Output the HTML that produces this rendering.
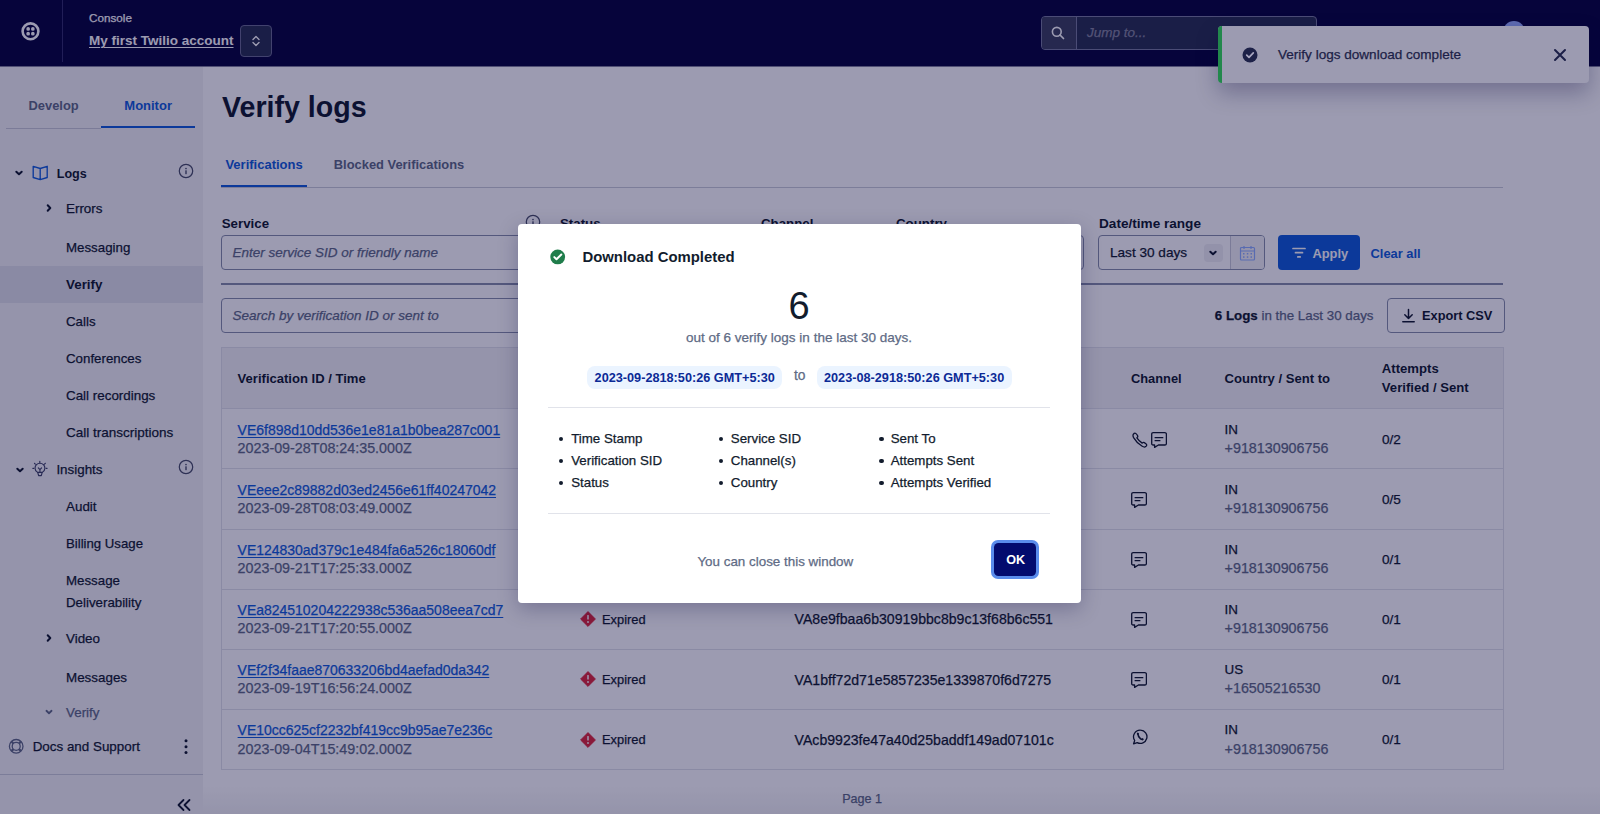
<!DOCTYPE html>
<html><head><meta charset="utf-8"><title>Verify logs</title>
<style>
html,body{margin:0;padding:0;}
body{width:1600px;height:814px;overflow:hidden;position:relative;background:#fff;font-family:"Liberation Sans",sans-serif;color:#121c2d;}
.a{position:absolute;}
.t{position:absolute;white-space:nowrap;}
.r{-webkit-text-stroke:0.25px currentColor;}
</style></head><body>
<div class="a" style="left:0px;top:0px;width:1600px;height:66px;background:#08053d"></div>
<div class="a" style="left:0px;top:66px;width:1600px;height:1px;background:#84839c"></div>
<div class="a" style="left:62px;top:0px;width:1px;height:62px;background:#34316a"></div>
<svg class="a" style="left:20px;top:21px;" width="22" height="22" viewBox="0 0 22 22"><circle cx="10.5" cy="10.3" r="7.9" fill="none" stroke="#fff" stroke-width="2.6"/><circle cx="8.15" cy="7.9" r="1.85" fill="#fff"/><circle cx="12.85" cy="7.9" r="1.85" fill="#fff"/><circle cx="8.15" cy="12.7" r="1.85" fill="#fff"/><circle cx="12.85" cy="12.7" r="1.85" fill="#fff"/></svg>
<div class="t r" style="left:89.00px;top:7.73px;font-size:11.7px;line-height:20px;font-weight:400;color:#ffffff;">Console</div>
<div class="t " style="left:89.00px;top:31.14px;font-size:13.5px;line-height:20px;font-weight:700;color:#ffffff;text-decoration:underline;text-underline-offset:2px;">My first Twilio account</div>
<div class="a" style="left:240px;top:25px;width:32px;height:32px;box-sizing:border-box;border:1px solid #6a6d90;border-radius:4px;background:#283050"></div>
<svg class="a" style="left:248px;top:33px;" width="16" height="16" viewBox="0 0 16 16"><path d="M5 6.5 L8 3.5 L11 6.5 M5 9.5 L8 12.5 L11 9.5" fill="none" stroke="#fff" stroke-width="1.4" stroke-linecap="round" stroke-linejoin="round"/></svg>
<div class="a" style="left:1040.5px;top:16px;width:276px;height:34px;box-sizing:border-box;border:1px solid #7a7d9e;border-radius:4px;background:#283050"></div>
<div class="a" style="left:1041.5px;top:17px;width:34.5px;height:32px;background:#3d425e;border-radius:3px 0 0 3px;border-right:1px solid #7a7d9e"></div>
<svg class="a" style="left:1050px;top:25px;" width="16" height="16" viewBox="0 0 16 16"><circle cx="6.8" cy="6.8" r="4.4" fill="none" stroke="#fff" stroke-width="1.6"/><path d="M10 10 L13.5 13.5" stroke="#fff" stroke-width="1.7" stroke-linecap="round"/></svg>
<div class="t r" style="left:1087.00px;top:23.04px;font-size:13.5px;line-height:20px;font-weight:400;color:#86889f;font-style:italic;">Jump to...</div>
<div class="a" style="left:1503px;top:21px;width:22px;height:22px;border-radius:50%;background:#99b0ff"></div>
<div class="a" style="left:0px;top:67px;width:203px;height:747px;background:#f4f4f6"></div>
<div class="t " style="left:28.50px;top:96.24px;font-size:12.9px;line-height:20px;font-weight:700;color:#606b85;">Develop</div>
<div class="t " style="left:124.30px;top:96.20px;font-size:13px;line-height:20px;font-weight:700;color:#125ed9;">Monitor</div>
<div class="a" style="left:6px;top:128px;width:95px;height:1px;background:#c8cbd6"></div>
<div class="a" style="left:101px;top:126px;width:94px;height:2px;background:#125ed9"></div>
<svg class="a" style="left:13.3px;top:167px;" width="12" height="12" viewBox="0 0 12 12"><path d="M3.3 4.7 L6 7.3 L8.7 4.7" fill="none" stroke="#121c2d" stroke-width="2.0" stroke-linecap="round" stroke-linejoin="round"/></svg>
<svg class="a" style="left:31.5px;top:165px;" width="17" height="16" viewBox="0 0 17 16"><path d="M1.2 1.3 L8.2 3.5 L15.2 1.3 L15.2 12.5 L8.2 14.6 L1.2 12.5 Z M8.2 3.5 L8.2 14.6" fill="none" stroke="#125ed9" stroke-width="1.35" stroke-linejoin="round"/></svg>
<div class="t " style="left:56.70px;top:163.54px;font-size:12.6px;line-height:20px;font-weight:700;color:#121c2d;">Logs</div>
<svg class="a" style="left:178px;top:163px;" width="16" height="16" viewBox="0 0 16 16"><circle cx="8" cy="8" r="6.7" fill="none" stroke="#4a5068" stroke-width="1.25"/><circle cx="8" cy="5.5" r="0.85" fill="#4a5068"/><rect x="7.3" y="7.2" width="1.4" height="4" rx="0.4" fill="#4a5068"/></svg>
<svg class="a" style="left:43.4px;top:202px;" width="12" height="12" viewBox="0 0 12 12"><path d="M4.7 3.3 L7.3 6 L4.7 8.7" fill="none" stroke="#121c2d" stroke-width="2.0" stroke-linecap="round" stroke-linejoin="round"/></svg>
<div class="t r" style="left:66.00px;top:198.57px;font-size:13.4px;line-height:20px;font-weight:400;color:#121c2d;">Errors</div>
<div class="t r" style="left:66.00px;top:237.60px;font-size:13.3px;line-height:20px;font-weight:400;color:#121c2d;">Messaging</div>
<div class="a" style="left:0px;top:266px;width:203px;height:37px;background:#e1e3ea"></div>
<div class="t " style="left:66.00px;top:274.87px;font-size:13.4px;line-height:20px;font-weight:700;color:#121c2d;">Verify</div>
<div class="t r" style="left:66.00px;top:312.00px;font-size:13.3px;line-height:20px;font-weight:400;color:#121c2d;">Calls</div>
<div class="t r" style="left:66.00px;top:349.00px;font-size:13.3px;line-height:20px;font-weight:400;color:#121c2d;">Conferences</div>
<div class="t r" style="left:66.00px;top:386.27px;font-size:13.4px;line-height:20px;font-weight:400;color:#121c2d;">Call recordings</div>
<div class="t r" style="left:66.00px;top:423.24px;font-size:13.5px;line-height:20px;font-weight:400;color:#121c2d;">Call transcriptions</div>
<svg class="a" style="left:13.5px;top:463.8px;" width="12" height="12" viewBox="0 0 12 12"><path d="M3.3 4.7 L6 7.3 L8.7 4.7" fill="none" stroke="#121c2d" stroke-width="2.0" stroke-linecap="round" stroke-linejoin="round"/></svg>
<svg class="a" style="left:31px;top:460px;" width="18" height="18" viewBox="0 0 18 18"><g fill="none" stroke="#3f4466" stroke-width="1.15" stroke-linecap="round" stroke-linejoin="round"><path d="M6.6 12.4 Q4 10.6 4 8.2 A4.95 4.95 0 0 1 13.9 8.2 Q13.9 10.6 11.3 12.4 Z"/><path d="M6.8 12.6 L7.6 15.6 L10.3 15.6 L11.1 12.6"/><path d="M7.3 7.8 L8.95 9.6 L10.6 7.8 M8.95 9.6 L8.95 12.2"/><path d="M8.8 1.3 L8.8 2.6 M3.5 3.3 L4.3 4.2 M14.3 3.3 L13.5 4.2 M1.8 8.3 L2.8 8.3 M15.1 8.3 L16.1 8.3"/></g></svg>
<div class="t r" style="left:56.40px;top:459.77px;font-size:13.4px;line-height:20px;font-weight:400;color:#121c2d;">Insights</div>
<svg class="a" style="left:178.1px;top:459.1px;" width="16" height="16" viewBox="0 0 16 16"><circle cx="8" cy="8" r="6.7" fill="none" stroke="#4a5068" stroke-width="1.25"/><circle cx="8" cy="5.5" r="0.85" fill="#4a5068"/><rect x="7.3" y="7.2" width="1.4" height="4" rx="0.4" fill="#4a5068"/></svg>
<div class="t r" style="left:66.00px;top:496.87px;font-size:13.4px;line-height:20px;font-weight:400;color:#121c2d;">Audit</div>
<div class="t r" style="left:66.00px;top:533.84px;font-size:13.2px;line-height:20px;font-weight:400;color:#121c2d;">Billing Usage</div>
<div class="t r" style="left:66.00px;top:571.00px;font-size:13.3px;line-height:20px;font-weight:400;color:#121c2d;">Message</div>
<div class="t r" style="left:66.00px;top:593.10px;font-size:13.3px;line-height:20px;font-weight:400;color:#121c2d;">Deliverability</div>
<svg class="a" style="left:43.3px;top:632px;" width="12" height="12" viewBox="0 0 12 12"><path d="M4.7 3.3 L7.3 6 L4.7 8.7" fill="none" stroke="#121c2d" stroke-width="2.0" stroke-linecap="round" stroke-linejoin="round"/></svg>
<div class="t r" style="left:66.00px;top:628.67px;font-size:13.4px;line-height:20px;font-weight:400;color:#121c2d;">Video</div>
<div class="t r" style="left:66.00px;top:667.57px;font-size:13.4px;line-height:20px;font-weight:400;color:#121c2d;">Messages</div>
<svg class="a" style="left:42.9px;top:706px;" width="12" height="12" viewBox="0 0 12 12"><path d="M3.435 4.765000000000001 L6 7.234999999999999 L8.565 4.765000000000001" fill="none" stroke="#606b85" stroke-width="1.8" stroke-linecap="round" stroke-linejoin="round"/></svg>
<div class="t r" style="left:66.00px;top:702.57px;font-size:13.4px;line-height:20px;font-weight:400;color:#606b85;">Verify</div>
<svg class="a" style="left:7.5px;top:738px;" width="17" height="17" viewBox="0 0 17 17"><g fill="none" stroke="#606b85" stroke-width="1.3"><circle cx="8.2" cy="8.3" r="6.8"/><circle cx="8.2" cy="8.3" r="4"/><path d="M3.4 3.5 L5.4 5.5 M13 3.5 L11 5.5 M3.4 13.1 L5.4 11.1 M13 13.1 L11 11.1" stroke-width="2.2"/></g></svg>
<div class="t r" style="left:32.70px;top:736.67px;font-size:13.4px;line-height:20px;font-weight:400;color:#121c2d;">Docs and Support</div>
<svg class="a" style="left:182px;top:738px;" width="8" height="18" viewBox="0 0 8 18"><circle cx="4" cy="2.8" r="1.5" fill="#121c2d"/><circle cx="4" cy="8.7" r="1.5" fill="#121c2d"/><circle cx="4" cy="14.6" r="1.5" fill="#121c2d"/></svg>
<div class="a" style="left:0px;top:774px;width:203px;height:1px;background:#cacdd8"></div>
<svg class="a" style="left:176px;top:798px;" width="16" height="14" viewBox="0 0 16 14"><path d="M7.5 2 L2.5 7 L7.5 12 M13.5 2 L8.5 7 L13.5 12" fill="none" stroke="#121c2d" stroke-width="1.8" stroke-linecap="round" stroke-linejoin="round"/></svg>
<div class="t " style="left:222.00px;top:89.05px;font-size:28.6px;line-height:36px;font-weight:700;color:#121c2d;">Verify logs</div>
<div class="t " style="left:225.40px;top:155.10px;font-size:13px;line-height:20px;font-weight:700;color:#125ed9;">Verifications</div>
<div class="t " style="left:333.80px;top:155.14px;font-size:12.9px;line-height:20px;font-weight:700;color:#606b85;">Blocked Verifications</div>
<div class="a" style="left:221px;top:187px;width:1282px;height:1px;background:#cacdd8"></div>
<div class="a" style="left:221px;top:185px;width:86px;height:2px;background:#125ed9"></div>
<div class="t " style="left:221.75px;top:213.85px;font-size:13.3px;line-height:20px;font-weight:700;color:#121c2d;">Service</div>
<svg class="a" style="left:524.5px;top:213.5px;" width="16" height="16" viewBox="0 0 16 16"><circle cx="8" cy="8" r="6.7" fill="none" stroke="#4a5068" stroke-width="1.25"/><circle cx="8" cy="5.5" r="0.85" fill="#4a5068"/><rect x="7.3" y="7.2" width="1.4" height="4" rx="0.4" fill="#4a5068"/></svg>
<div class="t " style="left:560.00px;top:213.85px;font-size:13.3px;line-height:20px;font-weight:700;color:#121c2d;">Status</div>
<div class="t " style="left:761.00px;top:213.85px;font-size:13.3px;line-height:20px;font-weight:700;color:#121c2d;">Channel</div>
<div class="t " style="left:896.00px;top:213.85px;font-size:13.3px;line-height:20px;font-weight:700;color:#121c2d;">Country</div>
<div class="t " style="left:1099.00px;top:213.76px;font-size:13.6px;line-height:20px;font-weight:700;color:#121c2d;">Date/time range</div>
<div class="a" style="left:220.5px;top:235px;width:325px;height:35px;box-sizing:border-box;border:1px solid #8891aa;border-radius:4px;background:#fff;"></div>
<div class="t r" style="left:232.50px;top:243.04px;font-size:13.5px;line-height:20px;font-weight:400;color:#606b85;font-style:italic;">Enter service SID or friendly name</div>
<div class="a" style="left:560px;top:235px;width:186px;height:35px;box-sizing:border-box;border:1px solid #8891aa;border-radius:4px;background:#fff;"></div>
<div class="a" style="left:761px;top:235px;width:120px;height:35px;box-sizing:border-box;border:1px solid #8891aa;border-radius:4px;background:#fff;"></div>
<div class="a" style="left:896px;top:235px;width:188px;height:35px;box-sizing:border-box;border:1px solid #8891aa;border-radius:4px;background:#fff;"></div>
<div class="a" style="left:1098px;top:235px;width:167px;height:35px;box-sizing:border-box;border:1px solid #8891aa;border-radius:4px;background:#fff;"></div>
<div class="t r" style="left:1110.00px;top:243.41px;font-size:13.6px;line-height:20px;font-weight:400;color:#121c2d;">Last 30 days</div>
<div class="a" style="left:1204px;top:243.5px;width:18.5px;height:18.5px;background:#f0f1f4;border-radius:4px"></div>
<svg class="a" style="left:1207.2px;top:247px;" width="12" height="12" viewBox="0 0 12 12"><path d="M3.3 4.7 L6 7.3 L8.7 4.7" fill="none" stroke="#121c2d" stroke-width="2" stroke-linecap="round" stroke-linejoin="round"/></svg>
<div class="a" style="left:1230px;top:236px;width:34px;height:33px;box-sizing:border-box;background:#f4f4f6;border-left:1px solid #c8cbd6;border-radius:0 3px 3px 0"></div>
<svg class="a" style="left:1239px;top:245px;" width="17" height="16" viewBox="0 0 17 16"><g fill="none" stroke="#8fb0ff" stroke-width="1.2"><rect x="1.5" y="2.5" width="14" height="12.5" rx="1"/><path d="M1.5 6 L15.5 6 M5 1 L5 4 M12 1 L12 4"/></g><g fill="#8fb0ff"><rect x="4" y="8" width="1.5" height="1.5"/><rect x="7.8" y="8" width="1.5" height="1.5"/><rect x="11.5" y="8" width="1.5" height="1.5"/><rect x="4" y="11.3" width="1.5" height="1.5"/><rect x="7.8" y="11.3" width="1.5" height="1.5"/><rect x="11.5" y="11.3" width="1.5" height="1.5"/></g></svg>
<div class="a" style="left:1278px;top:235px;width:82px;height:35px;background:#125ed9;border-radius:4px"></div>
<svg class="a" style="left:1291px;top:245px;" width="16" height="16" viewBox="0 0 16 16"><path d="M2 3.5 L14 3.5 M4.5 7.7 L11.5 7.7 M6.8 11.9 L9.2 11.9" stroke="#fff" stroke-width="1.7" stroke-linecap="round"/></svg>
<div class="t " style="left:1312.40px;top:243.74px;font-size:12.9px;line-height:20px;font-weight:700;color:#fff;">Apply</div>
<div class="t " style="left:1370.50px;top:243.74px;font-size:12.9px;line-height:20px;font-weight:700;color:#125ed9;">Clear all</div>
<div class="a" style="left:221px;top:283px;width:1282px;height:2px;background:#8891aa"></div>
<div class="a" style="left:220.5px;top:298px;width:620px;height:35px;box-sizing:border-box;border:1px solid #8891aa;border-radius:4px;background:#fff;"></div>
<div class="t r" style="left:232.50px;top:306.04px;font-size:13.5px;line-height:20px;font-weight:400;color:#606b85;font-style:italic;">Search by verification ID or sent to</div>
<div class="t r" style="right:226.5px;top:306.49px;font-size:13.35px;line-height:20px;color:#606b85;text-align:right"><b style="color:#121c2d">6 Logs</b> in the Last 30 days</div>
<div class="a" style="left:1387px;top:298px;width:118px;height:35px;box-sizing:border-box;border:1px solid #8891aa;border-radius:4px;background:#fff"></div>
<svg class="a" style="left:1401px;top:308px;" width="16" height="16" viewBox="0 0 16 16"><path d="M7.5 1.5 L7.5 10.5 M3.8 6.8 L7.5 10.5 L11.2 6.8 M1.8 13.8 L13.2 13.8" fill="none" stroke="#121c2d" stroke-width="1.5" stroke-linecap="round" stroke-linejoin="round"/></svg>
<div class="t " style="left:1422.00px;top:306.37px;font-size:12.8px;line-height:20px;font-weight:700;color:#121c2d;">Export CSV</div>
<div class="a" style="left:221px;top:347px;width:1283px;height:423px;box-sizing:border-box;border:1px solid #e1e3ea;background:#fff"></div>
<div class="a" style="left:222px;top:348px;width:1281px;height:60px;background:#f4f4f6;border-bottom:1px solid #e1e3ea"></div>
<div class="t " style="left:237.60px;top:368.69px;font-size:13.05px;line-height:20px;font-weight:700;color:#121c2d;">Verification ID / Time</div>
<div class="t " style="left:580.60px;top:368.69px;font-size:13.05px;line-height:20px;font-weight:700;color:#121c2d;">Status</div>
<div class="t " style="left:794.60px;top:368.69px;font-size:13.05px;line-height:20px;font-weight:700;color:#121c2d;">Verification SID</div>
<div class="t " style="left:1131.00px;top:368.75px;font-size:12.85px;line-height:20px;font-weight:700;color:#121c2d;">Channel</div>
<div class="t " style="left:1224.60px;top:368.67px;font-size:13.1px;line-height:20px;font-weight:700;color:#121c2d;">Country / Sent to</div>
<div class="t " style="left:1381.80px;top:359.25px;font-size:13.15px;line-height:20px;font-weight:700;color:#121c2d;">Attempts</div>
<div class="t " style="left:1381.80px;top:378.05px;font-size:13.15px;line-height:20px;font-weight:700;color:#121c2d;">Verified / Sent</div>
<div class="t r" style="left:237.60px;top:419.78px;font-size:13.97px;line-height:20px;font-weight:400;color:#125ed9;text-decoration:underline;text-underline-offset:1.5px;">VE6f898d10dd536e1e81a1b0bea287c001</div>
<div class="t r" style="left:237.60px;top:438.07px;font-size:14.3px;line-height:20px;font-weight:400;color:#606b85;">2023-09-28T08:24:35.000Z</div>
<svg class="a" style="left:1132px;top:431.5px;" width="16" height="16" viewBox="0 0 16 16"><path d="M2.3 1.3 Q3.6 0.8 4.8 2.5 L5.6 3.7 Q6.1 4.6 5.3 5.4 L4.9 5.8 Q6.9 8.9 10.2 11.1 L10.6 10.7 Q11.4 10 12.3 10.6 L13.9 11.7 Q15.2 12.8 14.4 13.9 L13.7 14.6 Q12.4 15.6 10.2 14.3 Q4.6 10.9 1.6 5.6 Q0.5 3.5 1.4 2.2 Z" fill="none" stroke="#121c2d" stroke-width="1.3" stroke-linejoin="round"/></svg>
<svg class="a" style="left:1150.5px;top:432.0px;" width="16" height="16" viewBox="0 0 16 16"><path d="M2.2 0.7 H13.9 Q15.4 0.7 15.4 2.2 V11.5 Q15.4 13 13.9 13 H7.4 L3.6 15.4 V13 H2.2 Q0.7 13 0.7 11.5 V2.2 Q0.7 0.7 2.2 0.7 Z" fill="none" stroke="#121c2d" stroke-width="1.3" stroke-linejoin="round"/><path d="M3.6 5.6 H12.3 M3.6 8.6 H9.4" stroke="#121c2d" stroke-width="1.3"/></svg>
<div class="t r" style="left:1224.60px;top:419.97px;font-size:13.4px;line-height:20px;font-weight:400;color:#121c2d;">IN</div>
<div class="t r" style="left:1224.60px;top:438.07px;font-size:14.3px;line-height:20px;font-weight:400;color:#606b85;">+918130906756</div>
<div class="t r" style="left:1382.00px;top:429.51px;font-size:13.6px;line-height:20px;font-weight:400;color:#121c2d;">0/2</div>
<div class="a" style="left:222px;top:468px;width:1281px;height:1px;background:#e1e3ea"></div>
<div class="t r" style="left:237.60px;top:479.88px;font-size:13.97px;line-height:20px;font-weight:400;color:#125ed9;text-decoration:underline;text-underline-offset:1.5px;">VEeee2c89882d03ed2456e61ff40247042</div>
<div class="t r" style="left:237.60px;top:498.17px;font-size:14.3px;line-height:20px;font-weight:400;color:#606b85;">2023-09-28T08:03:49.000Z</div>
<svg class="a" style="left:1131.3px;top:492.1px;" width="16" height="16" viewBox="0 0 16 16"><path d="M2.2 0.7 H13.9 Q15.4 0.7 15.4 2.2 V11.5 Q15.4 13 13.9 13 H7.4 L3.6 15.4 V13 H2.2 Q0.7 13 0.7 11.5 V2.2 Q0.7 0.7 2.2 0.7 Z" fill="none" stroke="#121c2d" stroke-width="1.3" stroke-linejoin="round"/><path d="M3.6 5.6 H12.3 M3.6 8.6 H9.4" stroke="#121c2d" stroke-width="1.3"/></svg>
<div class="t r" style="left:1224.60px;top:480.07px;font-size:13.4px;line-height:20px;font-weight:400;color:#121c2d;">IN</div>
<div class="t r" style="left:1224.60px;top:498.17px;font-size:14.3px;line-height:20px;font-weight:400;color:#606b85;">+918130906756</div>
<div class="t r" style="left:1382.00px;top:489.61px;font-size:13.6px;line-height:20px;font-weight:400;color:#121c2d;">0/5</div>
<div class="a" style="left:222px;top:529px;width:1281px;height:1px;background:#e1e3ea"></div>
<div class="t r" style="left:237.60px;top:539.98px;font-size:13.97px;line-height:20px;font-weight:400;color:#125ed9;text-decoration:underline;text-underline-offset:1.5px;">VE124830ad379c1e484fa6a526c18060df</div>
<div class="t r" style="left:237.60px;top:558.27px;font-size:14.3px;line-height:20px;font-weight:400;color:#606b85;">2023-09-21T17:25:33.000Z</div>
<svg class="a" style="left:1131.3px;top:552.2px;" width="16" height="16" viewBox="0 0 16 16"><path d="M2.2 0.7 H13.9 Q15.4 0.7 15.4 2.2 V11.5 Q15.4 13 13.9 13 H7.4 L3.6 15.4 V13 H2.2 Q0.7 13 0.7 11.5 V2.2 Q0.7 0.7 2.2 0.7 Z" fill="none" stroke="#121c2d" stroke-width="1.3" stroke-linejoin="round"/><path d="M3.6 5.6 H12.3 M3.6 8.6 H9.4" stroke="#121c2d" stroke-width="1.3"/></svg>
<div class="t r" style="left:1224.60px;top:540.17px;font-size:13.4px;line-height:20px;font-weight:400;color:#121c2d;">IN</div>
<div class="t r" style="left:1224.60px;top:558.27px;font-size:14.3px;line-height:20px;font-weight:400;color:#606b85;">+918130906756</div>
<div class="t r" style="left:1382.00px;top:549.71px;font-size:13.6px;line-height:20px;font-weight:400;color:#121c2d;">0/1</div>
<div class="a" style="left:222px;top:589px;width:1281px;height:1px;background:#e1e3ea"></div>
<div class="t r" style="left:237.60px;top:600.08px;font-size:13.97px;line-height:20px;font-weight:400;color:#125ed9;text-decoration:underline;text-underline-offset:1.5px;">VEa824510204222938c536aa508eea7cd7</div>
<div class="t r" style="left:237.60px;top:618.37px;font-size:14.3px;line-height:20px;font-weight:400;color:#606b85;">2023-09-21T17:20:55.000Z</div>
<svg class="a" style="left:580.4px;top:611.3px;" width="16" height="16" viewBox="0 0 16 16"><path d="M8 0.6 L15.4 8 L8 15.4 L0.6 8 Z" fill="#e0283a" stroke="#e0283a" stroke-width="0.9" stroke-linejoin="round"/><rect x="7.25" y="4" width="1.5" height="4.6" rx="0.4" fill="#fff"/><circle cx="8" cy="11" r="0.9" fill="#fff"/></svg>
<div class="t r" style="left:602.00px;top:609.85px;font-size:12.85px;line-height:20px;font-weight:400;color:#121c2d;">Expired</div>
<div class="t r" style="left:794.60px;top:609.44px;font-size:14.1px;line-height:20px;font-weight:400;color:#121c2d;">VA8e9fbaa6b30919bbc8b9c13f68b6c551</div>
<svg class="a" style="left:1131.3px;top:612.3px;" width="16" height="16" viewBox="0 0 16 16"><path d="M2.2 0.7 H13.9 Q15.4 0.7 15.4 2.2 V11.5 Q15.4 13 13.9 13 H7.4 L3.6 15.4 V13 H2.2 Q0.7 13 0.7 11.5 V2.2 Q0.7 0.7 2.2 0.7 Z" fill="none" stroke="#121c2d" stroke-width="1.3" stroke-linejoin="round"/><path d="M3.6 5.6 H12.3 M3.6 8.6 H9.4" stroke="#121c2d" stroke-width="1.3"/></svg>
<div class="t r" style="left:1224.60px;top:600.27px;font-size:13.4px;line-height:20px;font-weight:400;color:#121c2d;">IN</div>
<div class="t r" style="left:1224.60px;top:618.37px;font-size:14.3px;line-height:20px;font-weight:400;color:#606b85;">+918130906756</div>
<div class="t r" style="left:1382.00px;top:609.81px;font-size:13.6px;line-height:20px;font-weight:400;color:#121c2d;">0/1</div>
<div class="a" style="left:222px;top:649px;width:1281px;height:1px;background:#e1e3ea"></div>
<div class="t r" style="left:237.60px;top:660.18px;font-size:13.97px;line-height:20px;font-weight:400;color:#125ed9;text-decoration:underline;text-underline-offset:1.5px;">VEf2f34faae870633206bd4aefad0da342</div>
<div class="t r" style="left:237.60px;top:678.47px;font-size:14.3px;line-height:20px;font-weight:400;color:#606b85;">2023-09-19T16:56:24.000Z</div>
<svg class="a" style="left:580.4px;top:671.4px;" width="16" height="16" viewBox="0 0 16 16"><path d="M8 0.6 L15.4 8 L8 15.4 L0.6 8 Z" fill="#e0283a" stroke="#e0283a" stroke-width="0.9" stroke-linejoin="round"/><rect x="7.25" y="4" width="1.5" height="4.6" rx="0.4" fill="#fff"/><circle cx="8" cy="11" r="0.9" fill="#fff"/></svg>
<div class="t r" style="left:602.00px;top:669.95px;font-size:12.85px;line-height:20px;font-weight:400;color:#121c2d;">Expired</div>
<div class="t r" style="left:794.60px;top:669.54px;font-size:14.1px;line-height:20px;font-weight:400;color:#121c2d;">VA1bff72d71e5857235e1339870f6d7275</div>
<svg class="a" style="left:1131.3px;top:672.4px;" width="16" height="16" viewBox="0 0 16 16"><path d="M2.2 0.7 H13.9 Q15.4 0.7 15.4 2.2 V11.5 Q15.4 13 13.9 13 H7.4 L3.6 15.4 V13 H2.2 Q0.7 13 0.7 11.5 V2.2 Q0.7 0.7 2.2 0.7 Z" fill="none" stroke="#121c2d" stroke-width="1.3" stroke-linejoin="round"/><path d="M3.6 5.6 H12.3 M3.6 8.6 H9.4" stroke="#121c2d" stroke-width="1.3"/></svg>
<div class="t r" style="left:1224.60px;top:660.37px;font-size:13.4px;line-height:20px;font-weight:400;color:#121c2d;">US</div>
<div class="t r" style="left:1224.60px;top:678.47px;font-size:14.3px;line-height:20px;font-weight:400;color:#606b85;">+16505216530</div>
<div class="t r" style="left:1382.00px;top:669.91px;font-size:13.6px;line-height:20px;font-weight:400;color:#121c2d;">0/1</div>
<div class="a" style="left:222px;top:709px;width:1281px;height:1px;background:#e1e3ea"></div>
<div class="t r" style="left:237.60px;top:720.28px;font-size:13.97px;line-height:20px;font-weight:400;color:#125ed9;text-decoration:underline;text-underline-offset:1.5px;">VE10cc625cf2232bf419cc9b95ae7e236c</div>
<div class="t r" style="left:237.60px;top:738.57px;font-size:14.3px;line-height:20px;font-weight:400;color:#606b85;">2023-09-04T15:49:02.000Z</div>
<svg class="a" style="left:580.4px;top:731.5px;" width="16" height="16" viewBox="0 0 16 16"><path d="M8 0.6 L15.4 8 L8 15.4 L0.6 8 Z" fill="#e0283a" stroke="#e0283a" stroke-width="0.9" stroke-linejoin="round"/><rect x="7.25" y="4" width="1.5" height="4.6" rx="0.4" fill="#fff"/><circle cx="8" cy="11" r="0.9" fill="#fff"/></svg>
<div class="t r" style="left:602.00px;top:730.05px;font-size:12.85px;line-height:20px;font-weight:400;color:#121c2d;">Expired</div>
<div class="t r" style="left:794.60px;top:729.64px;font-size:14.1px;line-height:20px;font-weight:400;color:#121c2d;">VAcb9923fe47a40d25baddf149ad07101c</div>
<svg class="a" style="left:1131.5px;top:729.3px;" width="16" height="16" viewBox="0 0 16 16"><path d="M8.6 1.2 A6.6 6.6 0 1 1 5.2 13.6 L1.6 14.8 L2.7 11.5 A6.6 6.6 0 0 1 8.6 1.2 Z" fill="none" stroke="#121c2d" stroke-width="1.3" stroke-linejoin="round"/><path d="M5.8 4.6 Q6.1 7.8 8.6 9.8 Q9.6 10.6 10.6 10.4" fill="none" stroke="#121c2d" stroke-width="1.6" stroke-linecap="round"/><circle cx="5.8" cy="4.8" r="1" fill="#121c2d"/><circle cx="10.5" cy="10.3" r="1" fill="#121c2d"/></svg>
<div class="t r" style="left:1224.60px;top:720.47px;font-size:13.4px;line-height:20px;font-weight:400;color:#121c2d;">IN</div>
<div class="t r" style="left:1224.60px;top:738.57px;font-size:14.3px;line-height:20px;font-weight:400;color:#606b85;">+918130906756</div>
<div class="t r" style="left:1382.00px;top:730.01px;font-size:13.6px;line-height:20px;font-weight:400;color:#121c2d;">0/1</div>
<div class="t r" style="left:842.20px;top:788.84px;font-size:12.6px;line-height:20px;font-weight:400;color:#606b85;">Page 1</div>
<div class="a" style="left:203px;top:786px;width:1397px;height:28px;background:linear-gradient(rgba(18,28,45,0),rgba(18,28,45,0.05))"></div>
<div class="a" style="left:0px;top:0px;width:1600px;height:814px;background:rgba(6,3,58,0.395)"></div>
<div class="a" style="left:1218px;top:25.75px;width:370.75px;height:56.75px;background:#9c9bb1;border-radius:4px;box-shadow:0 10px 22px rgba(6,3,58,0.28)"></div>
<div class="a" style="left:1218px;top:25.75px;width:4px;height:56.75px;background:#22884c;border-radius:4px 0 0 4px"></div>
<svg class="a" style="left:1241.5px;top:46.5px;" width="16" height="16" viewBox="0 0 16 16"><circle cx="8" cy="8" r="7.5" fill="#1d2148"/><path d="M4.7 8.2 L7 10.4 L11.3 5.9" fill="none" stroke="#a9a7c0" stroke-width="1.7" stroke-linecap="round" stroke-linejoin="round"/></svg>
<div class="t r" style="left:1278.00px;top:45.02px;font-size:13.55px;line-height:20px;font-weight:400;color:#1c1f47;">Verify logs download complete</div>
<svg class="a" style="left:1553px;top:47.5px;" width="14" height="14" viewBox="0 0 14 14"><path d="M2 2 L12 12 M12 2 L2 12" stroke="#1c1f47" stroke-width="2" stroke-linecap="round"/></svg>
<div class="a" style="left:518px;top:224px;width:562.6px;height:379px;background:#fff;border-radius:4px;box-shadow:0 6px 20px rgba(6,3,58,0.25)"></div>
<svg class="a" style="left:550px;top:248.5px;" width="16" height="16" viewBox="0 0 16 16"><circle cx="7.7" cy="7.9" r="7.4" fill="#207d4b"/><path d="M4.3 8.1 L6.5 10.3 L11.3 5.5" fill="none" stroke="#fff" stroke-width="2" stroke-linecap="round" stroke-linejoin="round"/></svg>
<div class="t " style="left:582.40px;top:246.68px;font-size:14.9px;line-height:20px;font-weight:700;color:#121c2d;">Download Completed</div>
<div class="t" style="left:518px;width:562px;text-align:center;top:285.84px;font-size:38px;line-height:40px;color:#121c2d">6</div>
<div class="t r" style="left:518px;width:562px;text-align:center;top:328.24px;font-size:13.5px;line-height:20px;color:#606b85">out of 6 verify logs in the last 30 days.</div>
<div class="a" style="left:587.3px;top:366px;width:195.2px;height:23px;background:#ebf4ff;border-radius:8px"></div>
<div class="t " style="left:594.60px;top:367.60px;font-size:12.7px;line-height:20px;font-weight:700;color:#0c2a96;">2023-09-2818:50:26 GMT+5:30</div>
<div class="t r" style="left:794.00px;top:366.04px;font-size:13.8px;line-height:20px;font-weight:400;color:#606b85;">to</div>
<div class="a" style="left:816.5px;top:366px;width:195.8px;height:23px;background:#ebf4ff;border-radius:8px"></div>
<div class="t " style="left:824.00px;top:367.60px;font-size:12.7px;line-height:20px;font-weight:700;color:#0c2a96;">2023-08-2918:50:26 GMT+5:30</div>
<div class="a" style="left:548px;top:407px;width:502.3px;height:1px;background:#e1e3ea"></div>
<div class="a" style="left:558.8px;top:436.5px;width:4.4px;height:4.4px;border-radius:50%;background:#121c2d"></div>
<div class="t r" style="left:571.20px;top:428.70px;font-size:13.3px;line-height:20px;font-weight:400;color:#121c2d;">Time Stamp</div>
<div class="a" style="left:558.8px;top:458.8px;width:4.4px;height:4.4px;border-radius:50%;background:#121c2d"></div>
<div class="t r" style="left:571.20px;top:451.00px;font-size:13.3px;line-height:20px;font-weight:400;color:#121c2d;">Verification SID</div>
<div class="a" style="left:558.8px;top:481.1px;width:4.4px;height:4.4px;border-radius:50%;background:#121c2d"></div>
<div class="t r" style="left:571.20px;top:473.30px;font-size:13.3px;line-height:20px;font-weight:400;color:#121c2d;">Status</div>
<div class="a" style="left:718.9px;top:436.5px;width:4.4px;height:4.4px;border-radius:50%;background:#121c2d"></div>
<div class="t r" style="left:730.80px;top:428.70px;font-size:13.3px;line-height:20px;font-weight:400;color:#121c2d;">Service SID</div>
<div class="a" style="left:718.9px;top:458.8px;width:4.4px;height:4.4px;border-radius:50%;background:#121c2d"></div>
<div class="t r" style="left:730.80px;top:451.00px;font-size:13.3px;line-height:20px;font-weight:400;color:#121c2d;">Channel(s)</div>
<div class="a" style="left:718.9px;top:481.1px;width:4.4px;height:4.4px;border-radius:50%;background:#121c2d"></div>
<div class="t r" style="left:730.80px;top:473.30px;font-size:13.3px;line-height:20px;font-weight:400;color:#121c2d;">Country</div>
<div class="a" style="left:879.2px;top:436.5px;width:4.4px;height:4.4px;border-radius:50%;background:#121c2d"></div>
<div class="t r" style="left:890.70px;top:428.70px;font-size:13.3px;line-height:20px;font-weight:400;color:#121c2d;">Sent To</div>
<div class="a" style="left:879.2px;top:458.8px;width:4.4px;height:4.4px;border-radius:50%;background:#121c2d"></div>
<div class="t r" style="left:890.70px;top:451.00px;font-size:13.3px;line-height:20px;font-weight:400;color:#121c2d;">Attempts Sent</div>
<div class="a" style="left:879.2px;top:481.1px;width:4.4px;height:4.4px;border-radius:50%;background:#121c2d"></div>
<div class="t r" style="left:890.70px;top:473.30px;font-size:13.3px;line-height:20px;font-weight:400;color:#121c2d;">Attempts Verified</div>
<div class="a" style="left:548px;top:512.5px;width:502.3px;height:1px;background:#e1e3ea"></div>
<div class="t r" style="left:697.40px;top:552.17px;font-size:13.4px;line-height:20px;font-weight:400;color:#606b85;">You can close this window</div>
<div class="a" style="left:991px;top:539.6px;width:48px;height:39.9px;box-sizing:border-box;border-radius:7px;background:#5a8ceb"></div>
<div class="a" style="left:994.2px;top:542.7px;width:41.8px;height:33.5px;border-radius:4.5px;background:#030b6e"></div>
<div class="t " style="left:1006.20px;top:550.34px;font-size:12.6px;line-height:20px;font-weight:700;color:#fff;">OK</div>
</body></html>
